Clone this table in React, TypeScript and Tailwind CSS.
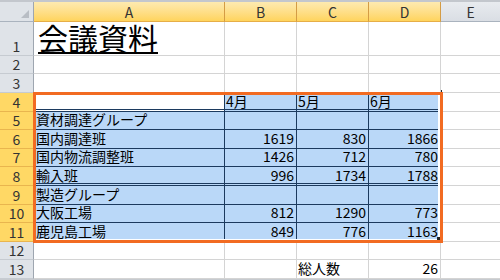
type Val = string | number | undefined;

type Row = {
  n: number;
  h: string;
  a?: Val;
  b?: Val;
  c?: Val;
  d?: Val;
};

const rows: Row[] = [
  { n: 1, h: "h-[34px]" },
  { n: 2, h: "h-[18px]" },
  { n: 3, h: "h-[19px]" },
  { n: 4, h: "h-[19px]", b: "4月", c: "5月", d: "6月" },
  { n: 5, h: "h-[18px]", a: "資材調達グループ" },
  { n: 6, h: "h-[19px]", a: "国内調達班", b: 1619, c: 830, d: 1866 },
  { n: 7, h: "h-[18px]", a: "国内物流調整班", b: 1426, c: 712, d: 780 },
  { n: 8, h: "h-[19px]", a: "輸入班", b: 996, c: 1734, d: 1788 },
  { n: 9, h: "h-[19px]", a: "製造グループ" },
  { n: 10, h: "h-[18px]", a: "大阪工場", b: 812, c: 1290, d: 773 },
  { n: 11, h: "h-[19px]", a: "鹿児島工場", b: 849, c: 776, d: 1163 },
  { n: 12, h: "h-[18px]" },
  { n: 13, h: "h-[19px]", c: "総人数", d: 26 },
];

const cols = ["a", "b", "c", "d"] as const;
type Col = (typeof cols)[number];

const widths: Record<Col, string> = {
  a: "w-[191px]",
  b: "w-[72px]",
  c: "w-[72px]",
  d: "w-[72px]",
};

const inTable = (n: number) => n >= 4 && n <= 11;

function cellClass(n: number, col: Col) {
  if (!inTable(n)) return "bg-white border-r border-b border-[#d4d4d4]";
  const bg = n === 4 && col === "a" ? "bg-white" : "bg-[#bad8f8]";
  const right = col === "d" ? "border-r border-r-[#d4d4d4]" : "border-r border-r-[#1c3a5e]";
  const bottom =
    n === 4 || n === 8
      ? "border-b-[3px] border-double border-b-[#1c3a5e]"
      : "border-b border-b-[#1c3a5e]";
  return `${bg} ${right} ${bottom}`;
}

function Cell({ n, col, value }: { n: number; col: Col; value: Val }) {
  const numeric = typeof value === "number";
  const pb = n === 4 || n === 8 ? "pb-[1px]" : "pb-[3px]";
  return (
    <div
      className={`${widths[col]} shrink-0 flex items-end overflow-visible whitespace-nowrap text-[14px] leading-none text-black ${pb} ${cellClass(n, col)} ${
        numeric ? "justify-end pr-[2px]" : col === "a" ? "pl-[2px]" : "pl-[1px]"
      }`}
    >
      {value}
    </div>
  );
}

function RowHeader({ n }: { n: number }) {
  const sel = inTable(n);
  return (
    <div
      className={`w-[34px] shrink-0 flex items-end justify-center pb-[2px] text-[14px] leading-none text-[#333] border-r border-b ${
        sel
          ? "bg-[#ffd865] border-b-[#e9b54e] border-r-[#e08a3a]"
          : "bg-[#dfe3e8] border-b-[#c6cbd1] border-r-[#9ea6b0]"
      }`}
    >
      {n}
    </div>
  );
}

function ColHeader({ label, w, sel }: { label: string; w: string; sel: boolean }) {
  return (
    <div
      className={`${w} shrink-0 flex items-center justify-center text-[14px] leading-none text-[#333] border-b ${
        sel
          ? "bg-linear-to-b from-[#fdeab0] to-[#ffd45c] border-r border-r-[#d49c45] border-b-[#e6ae47]"
          : "bg-linear-to-b from-[#e8ebef] to-[#dadee4] border-b-[#aab3be]"
      }`}
    >
      {label}
    </div>
  );
}

export default function App() {
  return (
    <div className="relative w-[500px] h-[280px] overflow-hidden bg-white font-['Noto_Sans_CJK_JP',sans-serif]">
      <div className="h-[2px] bg-[#c3c7cd]" />
      <div className="flex h-[20px]">
        <div className="w-[34px] shrink-0 flex items-end justify-end pr-[4px] pb-[3px] bg-[#dfe3e8] border-r border-b border-r-[#9ea6b0] border-b-[#aab3be]">
          <svg width="8" height="8" viewBox="0 0 8 8">
            <polygon points="8,0 8,8 0,8" fill="#b8bdc4" />
          </svg>
        </div>
        <ColHeader label="A" w="w-[191px]" sel />
        <ColHeader label="B" w="w-[72px]" sel />
        <ColHeader label="C" w="w-[72px]" sel />
        <ColHeader label="D" w="w-[72px]" sel />
        <ColHeader label="E" w="flex-1" sel={false} />
      </div>

      {rows.map((r) => (
        <div key={r.n} className={`flex ${r.h}`}>
          <RowHeader n={r.n} />
          {r.n === 1 ? (
            <div className="w-[191px] shrink-0 flex items-end pl-[4px] pb-[3px] bg-white border-r border-b border-[#d4d4d4] overflow-visible whitespace-nowrap">
              <span className="text-[30px] leading-none text-black underline decoration-[2px] underline-offset-[2px]">
                会議資料
              </span>
            </div>
          ) : (
            <Cell n={r.n} col="a" value={r.a} />
          )}
          <Cell n={r.n} col="b" value={r.b} />
          <Cell n={r.n} col="c" value={r.c} />
          <Cell n={r.n} col="d" value={r.d} />
          <div className="flex-1 bg-white border-b border-[#d4d4d4]" />
        </div>
      ))}

      <div className="h-[1px] bg-[#c6cacf]" />

      {/* selection frame over A4:D11 */}
      <div className="absolute left-[33px] top-[92px] w-[410px] h-[151px] border-[3px] border-[#f26b22] pointer-events-none">
        <div className="absolute inset-0 border-r-2 border-b-[1px] border-white" />
      </div>
      <div className="absolute left-[437px] top-[237px] w-[3px] h-[3px] bg-[#222]" />
      <div className="absolute left-[441px] top-[90px] w-[1px] h-[2px] bg-[#222]" />
    </div>
  );
}
